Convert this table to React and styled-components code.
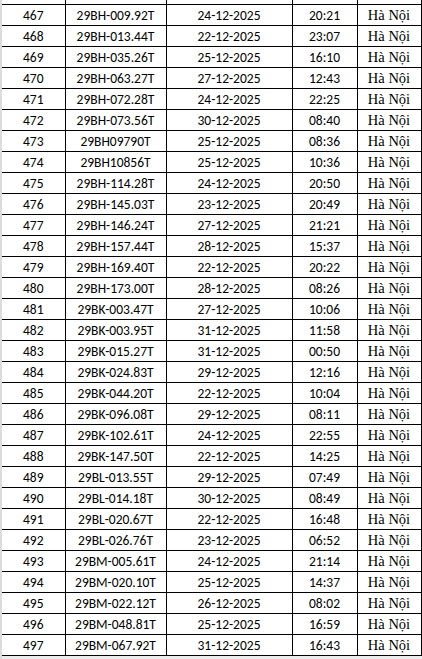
import styled, { createGlobalStyle } from "styled-components";

const GlobalStyle = createGlobalStyle`
	html, body {
		margin: 0;
		padding: 0;
		background: #ffffff;
	}
`;

const rows = [
	["467", "29BH-009.92T", "24-12-2025", "20:21"],
	["468", "29BH-013.44T", "22-12-2025", "23:07"],
	["469", "29BH-035.26T", "25-12-2025", "16:10"],
	["470", "29BH-063.27T", "27-12-2025", "12:43"],
	["471", "29BH-072.28T", "24-12-2025", "22:25"],
	["472", "29BH-073.56T", "30-12-2025", "08:40"],
	["473", "29BH09790T", "25-12-2025", "08:36"],
	["474", "29BH10856T", "25-12-2025", "10:36"],
	["475", "29BH-114.28T", "24-12-2025", "20:50"],
	["476", "29BH-145.03T", "23-12-2025", "20:49"],
	["477", "29BH-146.24T", "27-12-2025", "21:21"],
	["478", "29BH-157.44T", "28-12-2025", "15:37"],
	["479", "29BH-169.40T", "22-12-2025", "20:22"],
	["480", "29BH-173.00T", "28-12-2025", "08:26"],
	["481", "29BK-003.47T", "27-12-2025", "10:06"],
	["482", "29BK-003.95T", "31-12-2025", "11:58"],
	["483", "29BK-015.27T", "31-12-2025", "00:50"],
	["484", "29BK-024.83T", "29-12-2025", "12:16"],
	["485", "29BK-044.20T", "22-12-2025", "10:04"],
	["486", "29BK-096.08T", "29-12-2025", "08:11"],
	["487", "29BK-102.61T", "24-12-2025", "22:55"],
	["488", "29BK-147.50T", "22-12-2025", "14:25"],
	["489", "29BL-013.55T", "29-12-2025", "07:49"],
	["490", "29BL-014.18T", "30-12-2025", "08:49"],
	["491", "29BL-020.67T", "22-12-2025", "16:48"],
	["492", "29BL-026.76T", "23-12-2025", "06:52"],
	["493", "29BM-005.61T", "24-12-2025", "21:14"],
	["494", "29BM-020.10T", "25-12-2025", "14:37"],
	["495", "29BM-022.12T", "26-12-2025", "08:02"],
	["496", "29BM-048.81T", "25-12-2025", "16:59"],
	["497", "29BM-067.92T", "31-12-2025", "16:43"],
];

const widths = [63, 101, 126, 65, 64];

const Sheet = styled.div`
	width: 422px;
	height: 659px;
	box-sizing: border-box;
	border-left: 2px solid #dcdcdc;
	background: #ffffff;
	overflow: hidden;

	&::after {
		content: "";
		display: block;
		height: 4px;
		background: #ececec;
	}
`;

const Table = styled.table`
	border-collapse: collapse;
	table-layout: fixed;
	width: 419px;
	color: #000000;
`;

const Col = styled.col`
	width: ${(p) => p.$w}px;
`;

const StubRow = styled.tr`
	height: 4px;
`;

const StubCell = styled.td`
	border: 1px solid #000000;
	border-top: none;
	padding: 0;
	font-size: 0;
	line-height: 0;

	&:first-child {
		border-left: none;
	}
`;

const Row = styled.tr`
	height: 21px;
`;

const Cell = styled.td`
	border: 1px solid #000000;
	padding: 0;
	text-align: center;
	vertical-align: middle;
	white-space: nowrap;
	line-height: 16px;
	font-family: ${(p) => (p.$serif ? '"Liberation Serif", "Times New Roman", serif' : 'Carlito, "Open Sans", "Liberation Sans", sans-serif')};
	font-size: ${(p) => (p.$serif ? "14.5px" : "13.5px")};
	padding-top: ${(p) => (p.$serif ? "0" : "2px")};

	&:first-child {
		border-left: none;
	}
`;

const App = () => {
	return (
		<>
			<GlobalStyle />
			<Sheet>
				<Table>
					<colgroup>
						{widths.map((w, i) => (
							<Col key={i} $w={w} />
						))}
					</colgroup>
					<tbody>
						<StubRow>
							{widths.map((w, i) => (
								<StubCell key={i} />
							))}
						</StubRow>
						{rows.map(([stt, plate, date, time]) => (
							<Row key={stt}>
								<Cell>{stt}</Cell>
								<Cell>{plate}</Cell>
								<Cell>{date}</Cell>
								<Cell>{time}</Cell>
								<Cell $serif>Hà Nội</Cell>
							</Row>
						))}
					</tbody>
				</Table>
			</Sheet>
		</>
	);
};

export default App;
